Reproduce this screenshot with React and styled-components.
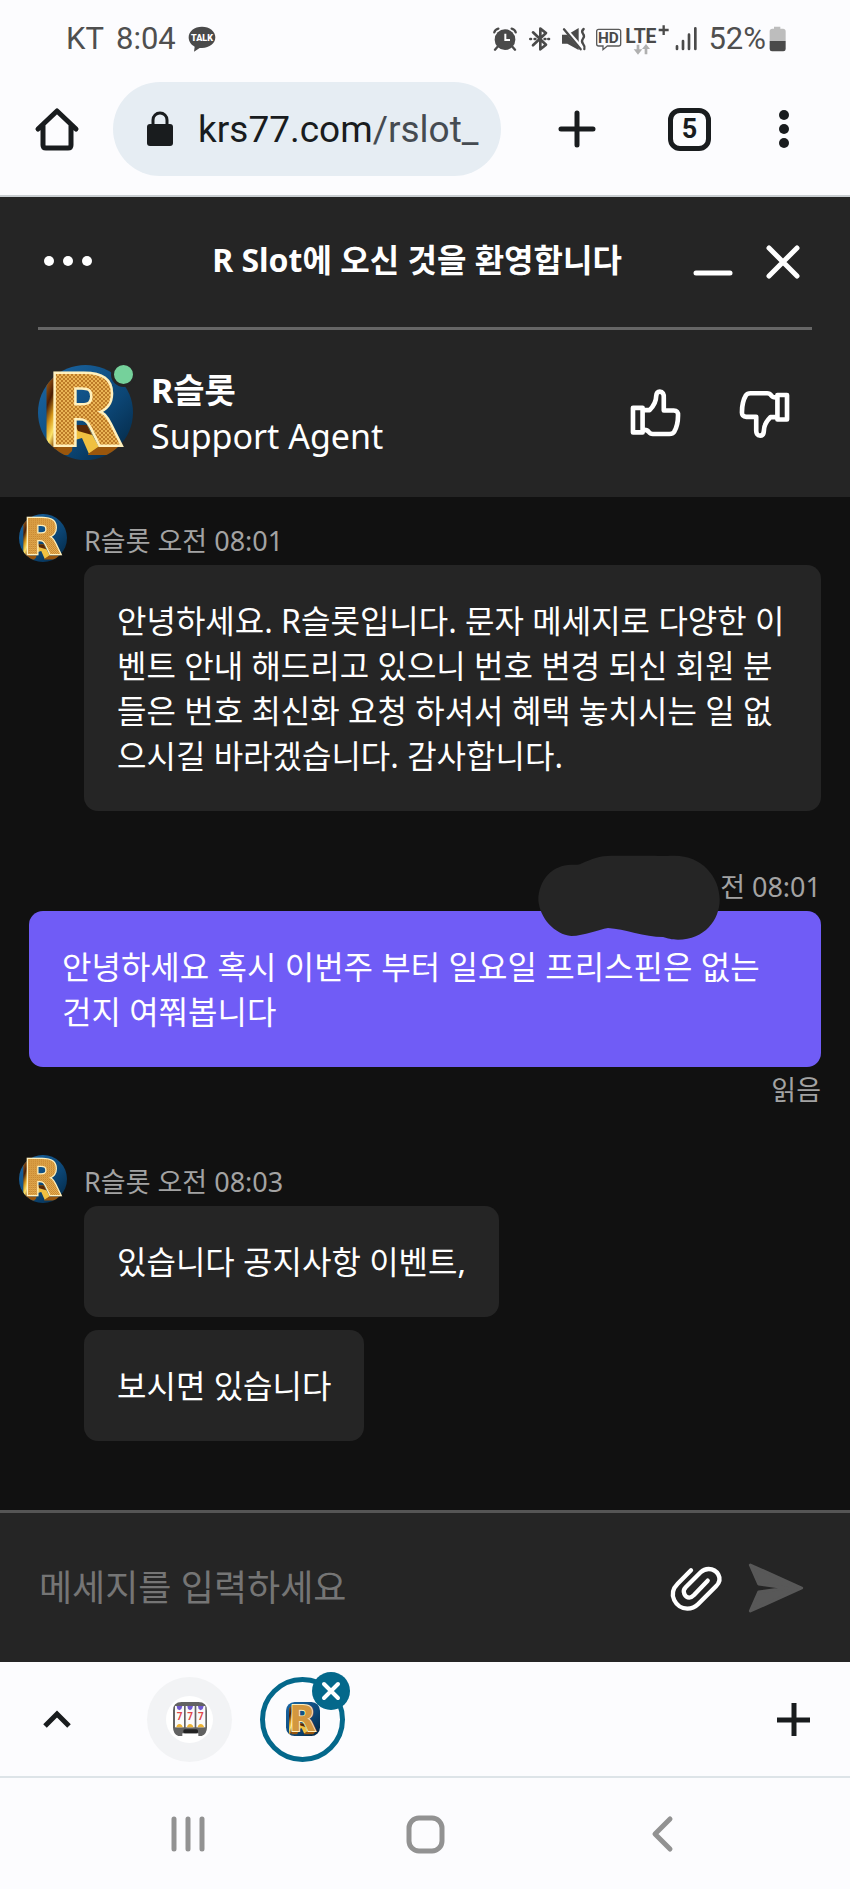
import styled, { createGlobalStyle } from "styled-components";

const GlobalStyle = createGlobalStyle`
  * {
    box-sizing: border-box;
  }

  body {
    margin: 0;
    background: #fcfcfe;
    font-family: "Noto Sans", "Noto Sans CJK KR", sans-serif;
  }
`;

const Screen = styled.div`
  display: flex;
  flex-direction: column;
  min-height: 100vh;
`;

const Icon = styled.svg`
  display: block;
  flex: none;
  overflow: visible;
`;

const IconButton = styled.button`
  display: flex;
  flex: none;
  align-items: center;
  justify-content: ${(p) => p.$align || "center"};
  width: ${(p) => p.$width}px;
  height: ${(p) => p.$height || 60}px;
  padding: 0;
  border: 0;
  background: none;
  color: inherit;
  cursor: pointer;
`;

/* phone status bar */

const StatusBar = styled.div`
  display: flex;
  align-items: center;
  height: 78px;
  padding: 0 64px 0 66px;
  color: #4f4f4f;
  font-family: Roboto, sans-serif;
  font-size: 31px;
  line-height: 36px;
`;

const Clock = styled.span`
  margin: 0 12px;
`;

const StatusIcons = styled.div`
  display: flex;
  align-items: center;
  margin-left: auto;
`;

/* browser bar */

const BrowserBar = styled.header`
  display: flex;
  align-items: center;
  padding: 4px 28px 19px 0;
  border-bottom: 2px solid #c9ced1;
  color: #191c1e;
`;

const AddressBox = styled.div`
  display: flex;
  flex: 1;
  align-items: center;
  gap: 25px;
  min-width: 0;
  height: 94px;
  margin-right: 19px;
  padding-left: 34px;
  border-radius: 47px;
  background: #e6edf3;
`;

const Address = styled.a`
  padding-top: 2px;
  color: #191c1e;
  font-family: Roboto, sans-serif;
  font-size: 37px;
  line-height: 48px;
  text-decoration: none;
  white-space: nowrap;

  span {
    color: #454b51;
  }
`;

const TabCount = styled.span`
  display: flex;
  align-items: center;
  justify-content: center;
  width: 43px;
  height: 43px;
  border: 5px solid #191c1e;
  border-radius: 12px;
  font-family: "Liberation Sans Narrow", Roboto, sans-serif;
  font-size: 27px;
  font-weight: 700;
  line-height: 32px;
`;

/* chat widget */

const ChatHeader = styled.section`
  padding: 0 38px;
  background: #252525;
  color: #fff;
`;

const TitleRow = styled.div`
  display: flex;
  align-items: center;
  height: 133px;
  border-bottom: 3px solid #666;
`;

const Title = styled.h1`
  flex: 1;
  margin: 0;
  padding-bottom: 6px;
  font-size: 32px;
  font-weight: 700;
  line-height: 45px;
  text-align: center;
`;

const WindowButtons = styled.div`
  display: flex;
  gap: 16px;
`;

const AgentRow = styled.div`
  display: flex;
  align-items: center;
  padding: 35px 0 37px;
`;

const AgentPicture = styled.div`
  position: relative;
`;

const OnlineDot = styled.span`
  position: absolute;
  top: -3px;
  right: -3px;
  width: 25px;
  height: 25px;
  border: 3px solid #252525;
  border-radius: 50%;
  background: #75d19b;
`;

const AgentText = styled.div`
  flex: 1;
  margin-left: 18px;
  font-size: 34px;
  line-height: 46px;
`;

const AgentName = styled.div`
  font-weight: 700;
`;

const RateButtons = styled.div`
  display: flex;
  gap: 13px;
`;

const Messages = styled.main`
  flex: 1;
  padding: 17px 29px 69px 19px;
  background: #111;
  color: #fff;
`;

const AgentGroup = styled.article`
  display: grid;
  grid-template-columns: 48px 1fr;
  column-gap: 17px;
`;

const UserGroup = styled.article`
  position: relative;
  display: flex;
  flex-direction: column;
  align-items: flex-end;
  margin: 49px 0 42px 10px;
`;

const Bubbles = styled.div`
  display: flex;
  flex-direction: column;
  align-items: flex-start;
  gap: 13px;
`;

const Meta = styled.div`
  padding-top: 3px;
  color: #a3a3a3;
  font-size: 27px;
  line-height: 48px;
`;

const ReadMark = styled.div`
  color: #a3a3a3;
  font-size: 27px;
  line-height: 46px;
`;

const Bubble = styled.p`
  margin: 0;
  padding: 33px;
  border-radius: 14px;
  background: ${(p) => (p.$own ? "#705cf6" : "#252525")};
  font-size: 32px;
  line-height: 45px;
`;

const Smudge = styled.svg`
  position: absolute;
  top: -5px;
  right: 101px;
`;

const Composer = styled.form`
  display: flex;
  align-items: center;
  gap: 8px;
  height: 152px;
  padding: 0 38px;
  border-top: 3px solid #555;
  background: #252525;
  color: #fff;
`;

const MessageInput = styled.input`
  flex: 1;
  min-width: 0;
  height: 60px;
  padding: 0 0 0 1px;
  border: 0;
  outline: 0;
  background: none;
  color: #fff;
  font-family: inherit;
  font-size: 36px;

  &::placeholder {
    color: #757575;
    opacity: 1;
  }
`;

/* tab strip and phone navigation */

const TabStrip = styled.nav`
  display: flex;
  align-items: center;
  height: 116px;
  border-bottom: 2px solid #dde4e8;
  color: #191c1e;
`;

const Tabs = styled.div`
  display: flex;
  flex: 1;
  gap: 28px;
  margin-left: 34px;
`;

const Tab = styled.button`
  position: relative;
  display: flex;
  align-items: center;
  justify-content: center;
  width: 85px;
  height: 85px;
  padding: 0;
  border: ${(p) => (p.$active ? "5px solid #04688b" : "0")};
  border-radius: 50%;
  background: ${(p) => (p.$active ? "#fcfcfe" : "#f2f3f5")};
`;

const TabIcon = styled.span`
  display: flex;
  align-items: center;
  justify-content: center;
  width: 47px;
  height: 47px;
  border-radius: 50%;
  background: #fff;
`;

const CloseBadge = styled.span`
  position: absolute;
  top: -10px;
  right: -10px;
  display: flex;
  align-items: center;
  justify-content: center;
  width: 38px;
  height: 38px;
  border-radius: 50%;
  background: #04688b;
`;

const PhoneNav = styled.nav`
  display: flex;
  justify-content: center;
  height: 111px;
  color: #929292;
`;

// gold letter with a knurled face and a dark, shiny left side
function RLogo({ size, id, square }) {
  return (
    <Icon width={size} height={size} viewBox="0 0 95 95" aria-hidden="true">
      <defs>
        <clipPath id={`${id}-clip`}>
          <rect width="95" height="95" rx={square ? 24 : 48} />
        </clipPath>
        <linearGradient id={`${id}-bg`} x1="0" y1="0" x2="1" y2="1">
          <stop offset="0" stopColor="#1c69a8" />
          <stop offset="0.6" stopColor="#0c4675" />
          <stop offset="1" stopColor="#02243f" />
        </linearGradient>
        <linearGradient id={`${id}-side`} x1="0" y1="0" x2="0.3" y2="1">
          <stop offset="0" stopColor="#a8641a" />
          <stop offset="0.35" stopColor="#4a1d04" />
          <stop offset="0.6" stopColor="#d89a1c" />
          <stop offset="0.8" stopColor="#fbe36a" />
          <stop offset="1" stopColor="#8a4a08" />
        </linearGradient>
        <pattern
          id={`${id}-face`}
          width="4"
          height="4"
          patternUnits="userSpaceOnUse"
        >
          <rect width="4" height="4" fill="#eab455" />
          <path d="M0 0l4 4M4 0l-4 4" stroke="#bd7b28" strokeWidth="1" />
        </pattern>
      </defs>
      <g clipPath={`url(#${id}-clip)`}>
        <rect width="95" height="95" fill={`url(#${id}-bg)`} />
        <path
          d="M10 18L20 8V82L10 88Z"
          fill={`url(#${id}-side)`}
          stroke={`url(#${id}-side)`}
          strokeWidth="3"
        />
        <path d="M14 90l6-8h16v-16l-2 20-4 4z" fill="#9a560c" />
        <path d="M37 60h12l12 22-10 7-7-16-7 2z" fill="#f0c040" />
        <path d="M50 89l10-7h24l-8 8H50z" fill="#9a560c" />
        <path d="M37 60h12l5 10-14-4z" fill="#5a2806" />
      </g>
      <text
        x="9"
        y="80"
        fontFamily='"DejaVu Sans", sans-serif'
        fontWeight="700"
        fontSize="97"
        fill={`url(#${id}-face)`}
        stroke="#fff0bd"
        strokeWidth="5"
        paintOrder="stroke"
      >
        R
      </text>
    </Icon>
  );
}

function StatusGlyphs() {
  return (
    <>
      <Icon width="35" height="30" viewBox="198 73 105 90" fill="#4a4a4a">
        <circle cx="237" cy="120" r="31" />
        <path
          d="M214 142l-7 8M260 142l7 8M205 98q2-8 12-11M269 98q-2-8-12-11"
          stroke="#4a4a4a"
          strokeWidth="7"
          strokeLinecap="round"
          fill="none"
        />
        <path d="M238 102v19h14" stroke="#fff" strokeWidth="6" fill="none" />
      </Icon>
      <Icon
        width="34"
        height="30"
        viewBox="303 73 102 90"
        fill="none"
        stroke="#4a4a4a"
        strokeWidth="8"
        strokeLinejoin="round"
        strokeLinecap="round"
      >
        <path d="M321 98l39 37-17 14V87l17 13-39 37" />
        <path d="M313 118h2M367 118h2M326 118h2M356 118h2" />
      </Icon>
      <Icon width="34" height="30" viewBox="405 73 102 90" fill="#4a4a4a">
        <path d="M408 105h16l34-20v66l-34-19h-16z" />
        <path d="M412 82l58 67" stroke="#fcfcfe" strokeWidth="12" />
        <path
          d="M414 89l50 60M473 88q-8 7-2 14t0 15 0 15 4 16"
          stroke="#4a4a4a"
          strokeWidth="7"
          strokeLinecap="round"
          fill="none"
        />
      </Icon>
      <Icon
        width="30"
        height="30"
        viewBox="507 73 90 90"
        fill="none"
        stroke="#5a5a5a"
        strokeWidth="4"
      >
        <path d="M518 89h60q6 0 6 6v38q0 6-6 6h-34l-13 11v-11h-13q-6 0-6-6V95q0-6 6-6z" />
        <text
          x="547"
          y="131"
          fill="#4a4a4a"
          stroke="none"
          textAnchor="middle"
          fontFamily="Roboto, sans-serif"
          fontWeight="700"
          fontSize="46"
        >
          HD
        </text>
      </Icon>
      <Icon width="48" height="33" viewBox="597 64 144 99" fill="#4a4a4a">
        <text
          x="598"
          y="124"
          fontFamily="Roboto, sans-serif"
          fontWeight="700"
          fontSize="58"
        >
          LTE
        </text>
        <path d="M698 85h30M713 71v29" stroke="#4a4a4a" strokeWidth="7" />
        <path
          d="M632 129v14h-9l13 16 13-16h-9v-14zM656 158v-16h-8l12-15 12 15h-8v16z"
          fill="#b0b0b0"
        />
      </Icon>
      <Icon
        width="35"
        height="30"
        viewBox="741 73 105 90"
        stroke="#4a4a4a"
        strokeWidth="8"
        strokeLinecap="round"
      >
        <path d="M753 140v8M771 124v24M789 105v43M808 86v62" />
      </Icon>
    </>
  );
}

function ThumbIcon({ down }) {
  return (
    <Icon
      width="53"
      height="53"
      viewBox={down ? "610 549 160 160" : "610 556 160 160"}
      fill="none"
      stroke="currentColor"
      strokeWidth="14"
      strokeLinejoin="round"
    >
      <g transform={down ? "rotate(180 690 636)" : undefined}>
        <path d="M622 622h29v74h-29z" />
        <path d="M652 629h20q20-20 20-42 1-14 11-14 13 0 12 19v38h30q14 0 13 15 0 30-12 50-4 6-14 6h-50q-8 0-12-6-6-8-18-6" />
      </g>
    </Icon>
  );
}

function SlotIcon() {
  return (
    <Icon width="34" height="34" viewBox="0 0 102 102" aria-hidden="true">
      <path
        d="M26 0h50q26 0 26 26v50q0 20-16 26H16Q0 96 0 76V26Q0 0 26 0z"
        fill="#626262"
      />
      <rect x="28" y="94" width="48" height="8" fill="#fff" />
      {[6, 38, 70].map((x) => (
        <g key={x}>
          <rect x={x} y="12" width="27" height="64" fill="#fafafa" />
          <path d={`M${x + 5} 12h17l-3 9-6 4-6-4z`} fill="#7059cf" />
          <path d={`M${x + 4} 76q1-9 9-10 9 1 10 10z`} fill="#eeb535" />
          <text
            x={x + 5}
            y="55"
            fill="#e04848"
            fontFamily="Roboto, sans-serif"
            fontWeight="700"
            fontSize="30"
          >
            7
          </text>
        </g>
      ))}
      <rect x="31" y="82" width="44" height="12" rx="5" fill="#222" />
    </Icon>
  );
}

const stroke = {
  fill: "none",
  stroke: "currentColor",
  strokeWidth: 5,
  strokeLinecap: "round",
  strokeLinejoin: "round",
};

export default () => (
  <>
    <GlobalStyle />
    <Screen>
      <StatusBar>
        <span>KT</span>
        <Clock>8:04</Clock>
        <Icon width="28" height="26" viewBox="0 0 84 78">
          <path
            d="M42 2c23 0 40 14 40 32S65 66 42 66h-7L18 77l2-15C9 57 2 46 2 34 2 16 19 2 42 2z"
            fill="#4a4a4a"
          />
          <text
            x="42"
            y="44"
            fill="#fff"
            textAnchor="middle"
            fontFamily="Roboto, sans-serif"
            fontWeight="900"
            fontSize="27"
          >
            TALK
          </text>
        </Icon>
        <StatusIcons>
          <StatusGlyphs />
          <span>52%</span>
          <Icon width="20" height="26" viewBox="0 0 60 78">
            <path
              d="M24 2h19v6h8q8 0 8 8v29H11V16q0-8 8-8h5z"
              fill="#bdbdbd"
            />
            <path d="M11 45h48v24q0 7-7 7H18q-7 0-7-7z" fill="#4a4a4a" />
          </Icon>
        </StatusIcons>
      </StatusBar>

      <BrowserBar>
        <IconButton $width={113} aria-label="홈">
          <Icon width="44" height="44" viewBox="0 0 44 44" {...stroke}>
            <path d="M3 22L22 4l19 18M8 18v20q0 3 3 3h22q3 0 3-3V18" />
          </Icon>
        </IconButton>
        <AddressBox>
          <Icon width="26" height="34" viewBox="0 0 26 34">
            <rect y="12" width="26" height="22" rx="3" fill="#191c1e" />
            <path
              d="M6 14V8a7 7 0 0 1 14 0v6"
              fill="none"
              stroke="#191c1e"
              strokeWidth="3"
            />
          </Icon>
          <Address href="#">
            krs77.com<span>/rslot_</span>
          </Address>
        </AddressBox>
        <IconButton $width={113} aria-label="새 탭">
          <Icon width="38" height="38" viewBox="0 0 38 38" {...stroke}>
            <path d="M3 19h32M19 3v32" />
          </Icon>
        </IconButton>
        <IconButton $width={113} aria-label="탭 5개">
          <TabCount>5</TabCount>
        </IconButton>
        <IconButton $width={76} aria-label="메뉴">
          <Icon width="10" height="38" viewBox="0 0 10 38" fill="currentColor">
            <circle cx="5" cy="5" r="5" />
            <circle cx="5" cy="19" r="5" />
            <circle cx="5" cy="33" r="5" />
          </Icon>
        </IconButton>
      </BrowserBar>

      <ChatHeader>
        <TitleRow>
          <IconButton $width={108} $align="flex-start" aria-label="더보기">
            <Icon width="54" height="12" viewBox="0 0 54 12" fill="currentColor">
              <circle cx="11" cy="5" r="5" />
              <circle cx="30" cy="5" r="5" />
              <circle cx="49" cy="5" r="5" />
            </Icon>
          </IconButton>
          <Title>R Slot에 오신 것을 환영합니다</Title>
          <WindowButtons>
            <IconButton $width={49} aria-label="최소화">
              <Icon width="40" height="34" viewBox="0 0 40 34" {...stroke}>
                <path d="M3 28h34" />
              </Icon>
            </IconButton>
            <IconButton $width={59} aria-label="닫기">
              <Icon width="34" height="34" viewBox="0 0 34 34" {...stroke}>
                <path d="M3 3l28 28M31 3L3 31" />
              </Icon>
            </IconButton>
          </WindowButtons>
        </TitleRow>
        <AgentRow>
          <AgentPicture>
            <RLogo size={95} id="agent" />
            <OnlineDot />
          </AgentPicture>
          <AgentText>
            <AgentName>R슬롯</AgentName>
            <div>Support Agent</div>
          </AgentText>
          <RateButtons>
            <IconButton $width={96} aria-label="좋아요">
              <ThumbIcon />
            </IconButton>
            <IconButton $width={96} aria-label="싫어요">
              <ThumbIcon down />
            </IconButton>
          </RateButtons>
        </AgentRow>
      </ChatHeader>

      <Messages>
        <AgentGroup>
          <RLogo size={48} id="first" />
          <div>
            <Meta>R슬롯 오전 08:01</Meta>
            <Bubbles>
              <Bubble>
                안녕하세요. R슬롯입니다. 문자 메세지로 다양한 이벤트 안내
                해드리고 있으니 번호 변경 되신 회원 분들은 번호 최신화 요청
                하셔서 혜택 놓치시는 일 없으시길 바라겠습니다. 감사합니다.
              </Bubble>
            </Bubbles>
          </div>
        </AgentGroup>

        <UserGroup>
          <Meta>전 08:01</Meta>
          <Bubble $own>
            안녕하세요 혹시 이번주 부터 일요일 프리스핀은 없는건지 여쭤봅니다
          </Bubble>
          <ReadMark>읽음</ReadMark>
          <Smudge width="182" height="85" viewBox="340 76 546 255">
            <path
              d="M341 212C341 150 385 105 440 105C452 105 462 107 472 101C500 88 525 78 560 78L690 78C710 81 725 78 750 78C830 78 885 140 885 210C885 270 840 330 760 330C740 330 730 326 715 322C660 322 600 298 550 295C520 300 480 318 440 319C390 315 345 265 341 212Z"
              fill="#252525"
            />
          </Smudge>
        </UserGroup>

        <AgentGroup>
          <RLogo size={48} id="second" />
          <div>
            <Meta>R슬롯 오전 08:03</Meta>
            <Bubbles>
              <Bubble>있습니다 공지사항 이벤트,</Bubble>
              <Bubble>보시면 있습니다</Bubble>
            </Bubbles>
          </div>
        </AgentGroup>
      </Messages>

      <Composer onSubmit={(e) => e.preventDefault()}>
        <MessageInput
          type="text"
          aria-label="메세지"
          placeholder="메세지를 입력하세요"
        />
        <IconButton $width={72} type="button" aria-label="파일 첨부">
          <Icon
            width="54"
            height="48"
            viewBox="731 193 162 144"
            {...stroke}
            strokeWidth={13}
          >
            <path d="M797 212L757 252C725 284 752 327 786 327C800 327 810 322 818 314L872 260C896 236 874 208 850 208C840 208 832 212 826 218L781 263C768 276 780 294 792 294C798 294 802 290 806 286L847 243" />
          </Icon>
        </IconButton>
        <IconButton $width={72} aria-label="보내기">
          <Icon width="56" height="52" viewBox="968 187 168 156">
            <path
              d="M975 196L1129 265L975 334L1000 277L1085 265L1000 253Z"
              fill="#585858"
              stroke="#585858"
              strokeWidth="9"
              strokeLinejoin="round"
            />
          </Icon>
        </IconButton>
      </Composer>

      <TabStrip>
        <IconButton $width={113} aria-label="탭 목록">
          <Icon
            width="28"
            height="18"
            viewBox="0 0 28 18"
            {...stroke}
            strokeLinecap="butt"
            strokeLinejoin="miter"
          >
            <path d="M2 16L14 4l12 12" />
          </Icon>
        </IconButton>
        <Tabs>
          <Tab aria-label="슬롯 탭">
            <TabIcon>
              <SlotIcon />
            </TabIcon>
          </Tab>
          <Tab $active aria-label="R슬롯 탭 닫기">
            <RLogo size={34} id="tab" square />
            <CloseBadge>
              <Icon
                width="18"
                height="18"
                viewBox="0 0 18 18"
                {...stroke}
                stroke="#fff"
                strokeWidth={4}
              >
                <path d="M2 2l14 14M16 2L2 16" />
              </Icon>
            </CloseBadge>
          </Tab>
        </Tabs>
        <IconButton $width={113} aria-label="탭 추가">
          <Icon
            width="33"
            height="33"
            viewBox="0 0 33 33"
            {...stroke}
            strokeLinecap="butt"
          >
            <path d="M0 17h33M17 0v33" />
          </Icon>
        </IconButton>
      </TabStrip>

      <PhoneNav>
        <IconButton $width={237} $height={111} aria-label="최근 앱">
          <Icon width="34" height="36" viewBox="0 0 34 36" {...stroke}>
            <path d="M3 3v30M17 3v30M31 3v30" />
          </Icon>
        </IconButton>
        <IconButton $width={237} $height={111} aria-label="홈 화면">
          <Icon width="38" height="38" viewBox="0 0 38 38" {...stroke}>
            <rect x="3" y="3" width="33" height="33" rx="10" />
          </Icon>
        </IconButton>
        <IconButton $width={237} $height={111} aria-label="뒤로">
          <Icon width="22" height="36" viewBox="0 0 22 36" {...stroke}>
            <path d="M19 3L4 18l15 15" />
          </Icon>
        </IconButton>
      </PhoneNav>
    </Screen>
  </>
);
